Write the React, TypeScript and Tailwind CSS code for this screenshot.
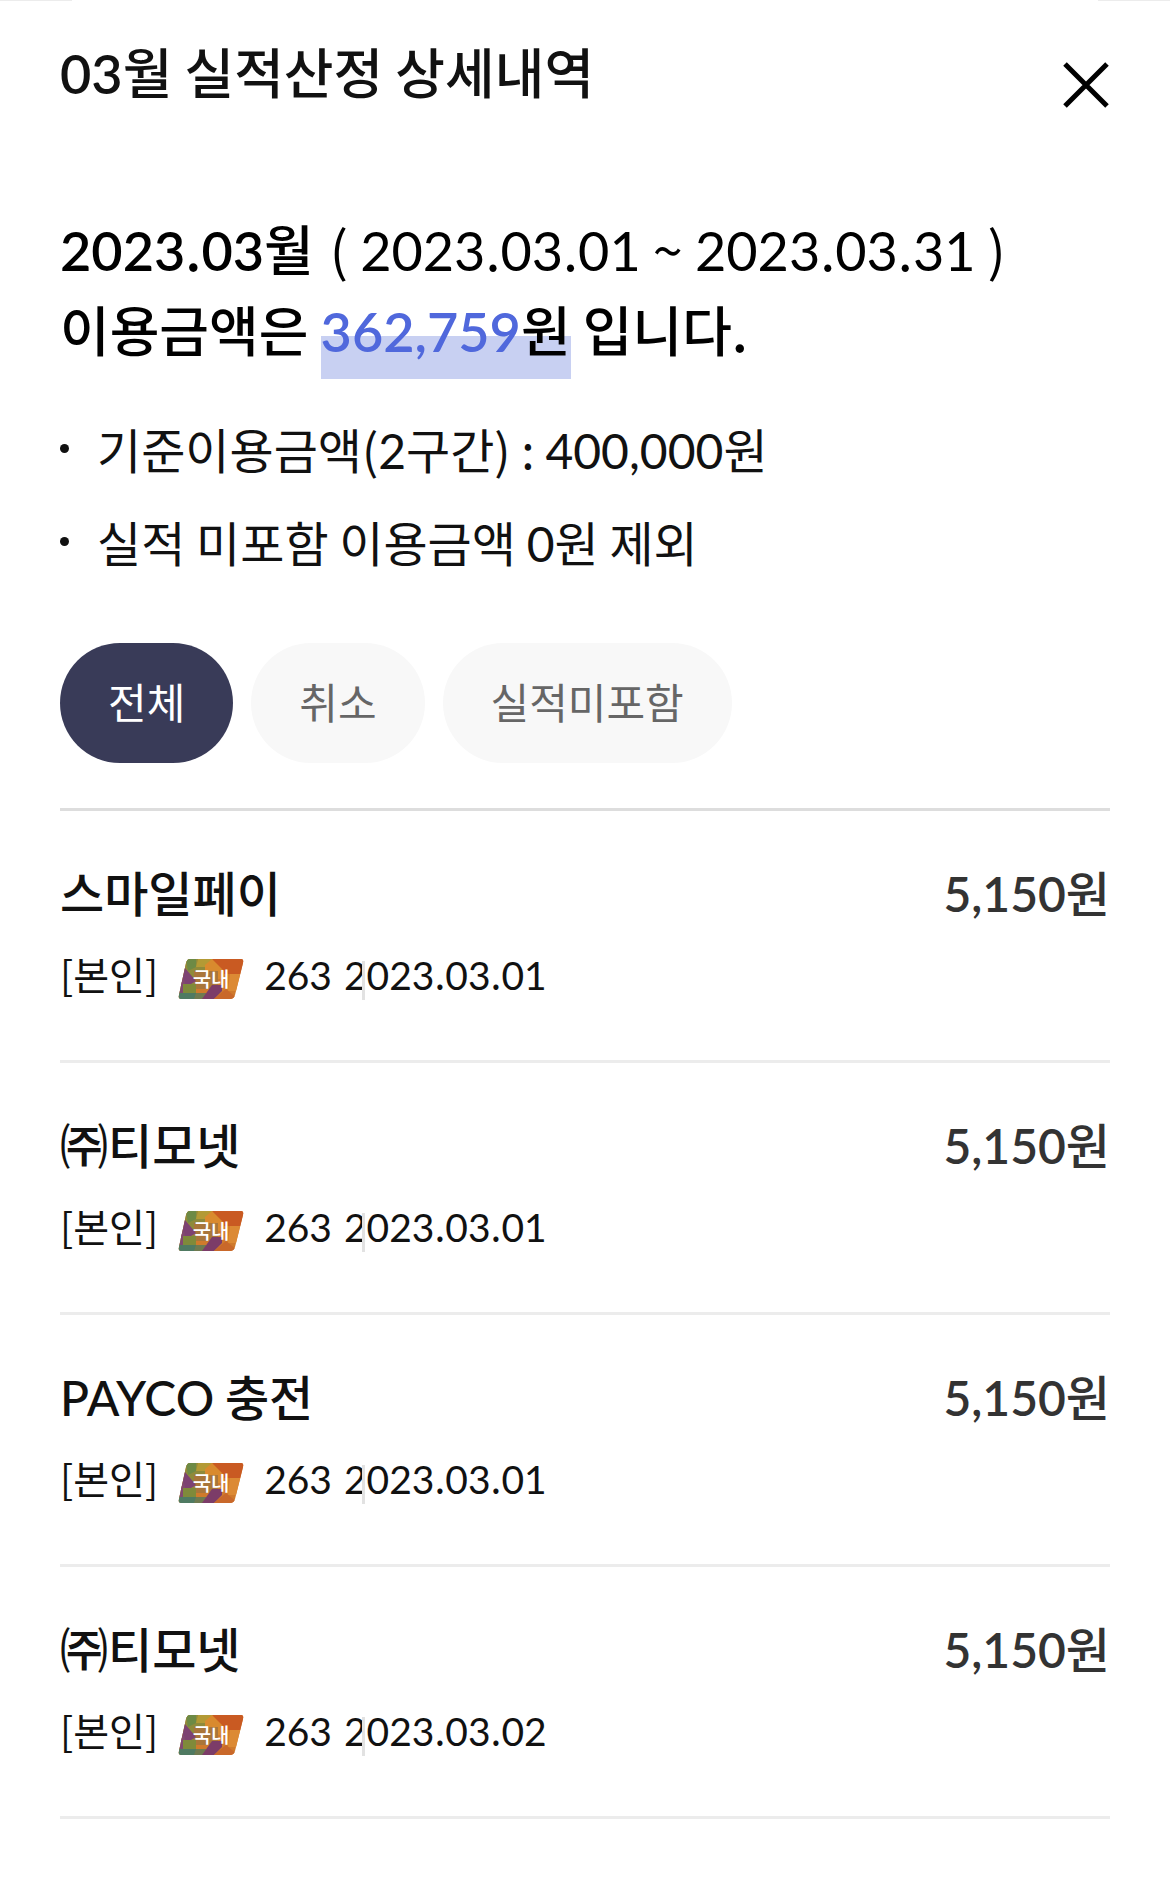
import { useState } from 'react'

type Usage = {
  id: number
  merchant: string
  amount: string
  card: string
  date: string
}

const usages: Usage[] = [
  { id: 1, merchant: '스마일페이', amount: '5,150', card: '263', date: '2023.03.01' },
  { id: 2, merchant: '㈜티모넷', amount: '5,150', card: '263', date: '2023.03.01' },
  { id: 3, merchant: 'PAYCO 충전', amount: '5,150', card: '263', date: '2023.03.01' },
  { id: 4, merchant: '㈜티모넷', amount: '5,150', card: '263', date: '2023.03.02' },
]

const tabs = ['전체', '취소', '실적미포함']

const notes = ['기준이용금액(2구간) : 400,000원', '실적 미포함 이용금액 0원 제외']

/** Digits and Latin letters are set in Lato, everything else keeps the Korean font. */
function Mixed({ text, strong = false }: { text: string; strong?: boolean }) {
  return text.split(/([\dA-Z,]+)/).map((part, i) =>
    i % 2 === 0 ? (
      part
    ) : (
      <span
        key={i}
        className={strong ? 'font-[Lato,sans-serif] leading-none font-semibold' : 'font-[Lato,sans-serif] leading-none'}
      >
        {part}
      </span>
    ),
  )
}

function CardBadge() {
  return (
    <span className="relative flex h-10 w-[66px] shrink-0 items-center justify-center">
      <svg viewBox="0 0 66 40" className="absolute inset-0 h-full w-full" aria-hidden="true">
        <defs>
          <clipPath id="badge">
            <path d="M12 0H63Q66 0 65 4L57 36Q56 40 52 40H3Q0 40 1 36L8 4Q9 0 12 0Z" />
          </clipPath>
        </defs>
        <g clipPath="url(#badge)">
          <path d="M0 0H66V40H0Z" fill="#cf7a2c" />
          <path d="M0 0H38L20 24L0 40Z" fill="#8f8a3a" />
          <path d="M8 0H18V8L10 12Z" fill="#6d8a45" />
          <path d="M20 0H36L28 8H18Z" fill="#b39a35" />
          <path d="M34 0H66V15H44Z" fill="#c95a22" />
          <path d="M27 6L34 0L46 12V20H27Z" fill="#d98a2e" />
          <path d="M16 12H40V30H16Z" fill="#a9763a" />
          <path d="M0 14L7 9L18 22L8 28H0Z" fill="#7d4272" />
          <path d="M0 26L6 20L10 34H0Z" fill="#824a70" />
          <path d="M5 25H18V34H5Z" fill="#7f8a3a" />
          <path d="M0 34H18V40H0Z" fill="#4f7a62" />
          <path d="M18 34H28V40H16Z" fill="#6f7a50" />
          <path d="M24 40L34 26L44 26V32L36 40Z" fill="#7c3c68" />
          <path d="M52 15H66V32H50Z" fill="#dc8a34" />
          <path d="M36 40L48 30L60 40Z" fill="#c9682a" />
        </g>
      </svg>
      <span className="relative text-[20px] leading-none font-medium text-white">국내</span>
    </span>
  )
}

function UsageRow({ usage }: { usage: Usage }) {
  return (
    <li className="border-b-3 border-[#ececec] pt-12 pb-[52px]">
      <div className="flex items-center justify-between text-5xl leading-[64px] font-medium">
        <h2 className="text-[#111]">
          <Mixed text={usage.merchant} />
        </h2>
        <strong className="font-medium text-[#333]">
          <Mixed text={`${usage.amount}원`} strong />
        </strong>
      </div>
      <div className="mt-[26px] flex h-[59px] items-start text-[39px] leading-[48px] text-[#111]">
        <span>[본인]</span>
        <span className="mt-[10px] ml-5 flex">
          <CardBadge />
        </span>
        <span className="ml-5 flex gap-3">
          <span>
            <Mixed text={usage.card} />
          </span>
          <span className="relative">
            <Mixed text={usage.date} />
            <span className="absolute top-3 left-[18px] h-[39px] w-[3px] bg-[#e2e2e2]" />
          </span>
        </span>
      </div>
    </li>
  )
}

export default function App() {
  const [selected, setSelected] = useState('전체')

  return (
    <main className="relative min-h-screen bg-white px-[60px] pt-8 font-['Noto_Sans_CJK_KR',sans-serif]">
      <div className="absolute inset-x-0 top-0 flex h-px justify-between">
        <span className="w-18 bg-[#ececec]" />
        <span className="w-18 bg-[#ececec]" />
      </div>

      <header className="flex items-start justify-between">
        <h1 className="text-[54px] leading-[78px] font-medium text-[#111]">
          <Mixed text="03월 실적산정 상세내역" strong />
        </h1>
        <button type="button" aria-label="닫기" className="mt-[29px]">
          <svg viewBox="0 0 48 48" className="h-12 w-12" fill="none" stroke="#000" strokeWidth="5">
            <path d="M3 3L45 45M45 3L3 45" />
          </svg>
        </button>
      </header>

      <section className="mt-[97px] text-[54px] leading-[81px] font-medium text-black">
        <p>
          <strong className="mr-1 font-medium">
            <Mixed text="2023.03월" strong />
          </strong>
          <span className="font-normal">
            <Mixed text=" ( 2023.03.01 ~ 2023.03.31 )" />
          </span>
        </p>
        <p>
          이용금액은{' '}
          <span className="relative inline-block">
            <span className="absolute inset-x-0 top-12 h-[43px] bg-[#c8d0f2]" />
            <span className="relative text-[#5068dc]">
              <Mixed text="362,759" strong />
            </span>
            <span className="relative">원</span>
          </span>{' '}
          입니다.
        </p>
      </section>

      <ul className="mt-[43px] space-y-[21px] text-5xl leading-[72px] text-[#111]">
        {notes.map((note) => (
          <li key={note} className="flex items-center">
            <span className="mr-7 h-[9px] w-[9px] rounded-full bg-[#111]" />
            <span>
              <Mixed text={note} />
            </span>
          </li>
        ))}
      </ul>

      <div className="mt-[66px] flex gap-[18px]">
        {tabs.map((tab) => (
          <button
            key={tab}
            type="button"
            onClick={() => setSelected(tab)}
            className={
              tab === selected
                ? 'h-[120px] rounded-full bg-[#393b58] px-12 pb-1.5 text-[42px] text-white'
                : 'h-[120px] rounded-full bg-[#f8f8f8] px-12 pb-1.5 text-[42px] text-[#666]'
            }
          >
            {tab}
          </button>
        ))}
      </div>

      <ul className="mt-[45px] border-t-3 border-[#ddd]">
        {usages.map((usage) => (
          <UsageRow key={usage.id} usage={usage} />
        ))}
      </ul>
    </main>
  )
}
